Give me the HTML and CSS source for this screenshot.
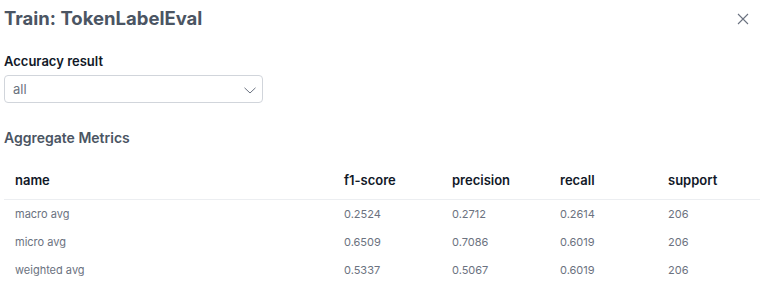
FILE: index.html
```html
<!DOCTYPE html>
<html lang="en">
  <head>
    <meta charset="UTF-8" />
    <meta name="viewport" content="width=device-width, initial-scale=1.0" />
    <title>Train: TokenLabelEval</title>
    <link rel="stylesheet" href="styles.css">
  </head>
  <body>
    <div class="modal">
      <div class="modal-header">
        <h2 class="modal-title">Train: TokenLabelEval</h2>
        <button class="close-button" aria-label="Close">
          <svg width="12" height="12" viewBox="0 0 12 12">
            <path d="M1 1 L11 11 M11 1 L1 11" stroke="#6b7280" stroke-width="1.1" fill="none" />
          </svg>
        </button>
      </div>

      <label class="field-label" for="accuracy">Accuracy result</label>
      <div class="select-box" id="accuracy">
        <span>all</span>
        <svg width="12" height="7" viewBox="0 0 12 7">
          <path d="M0.5 0.8 L6 6 L11.5 0.8" stroke="#6b7280" stroke-width="1" fill="none" />
        </svg>
      </div>

      <h3 class="section-title">Aggregate Metrics</h3>

      <table class="metrics">
        <colgroup>
          <col style="width: 329px" />
          <col style="width: 108px" />
          <col style="width: 108px" />
          <col style="width: 108px" />
          <col />
        </colgroup>
        <thead>
          <tr>
            <th>name</th>
            <th>f1-score</th>
            <th>precision</th>
            <th>recall</th>
            <th>support</th>
          </tr>
        </thead>
        <tbody>
          <tr>
            <td>macro avg</td>
            <td>0.2524</td>
            <td>0.2712</td>
            <td>0.2614</td>
            <td>206</td>
          </tr>
          <tr>
            <td>micro avg</td>
            <td>0.6509</td>
            <td>0.7086</td>
            <td>0.6019</td>
            <td>206</td>
          </tr>
          <tr>
            <td>weighted avg</td>
            <td>0.5337</td>
            <td>0.5067</td>
            <td>0.6019</td>
            <td>206</td>
          </tr>
        </tbody>
      </table>
    </div>
  </body>
</html>
```

FILE: styles.css
```css
body {
  margin: 0;
  background: #ffffff;
  font-family: Inter, "Noto Sans", sans-serif;
  color: #111827;
}

.modal {
  padding: 0 1px 0 4px;
}

.modal-header {
  display: flex;
  justify-content: space-between;
  align-items: flex-start;
  height: 32px;
}

.modal-title {
  margin: 0;
  padding-top: 4px;
  font-size: 18.5px;
  line-height: 28px;
  font-weight: 700;
  color: #4b5563;
}

.close-button {
  display: flex;
  border: none;
  background: none;
  padding: 0;
  margin: 13px 11px 0 0;
  cursor: pointer;
}

.field-label {
  display: block;
  margin-top: 19px;
  font-size: 13px;
  line-height: 20px;
  font-weight: 600;
  color: #111827;
}

.select-box {
  display: flex;
  justify-content: space-between;
  align-items: center;
  box-sizing: border-box;
  width: 259px;
  height: 28px;
  margin-top: 4px;
  padding: 0 6px 0 8px;
  border: 1px solid #d1d5db;
  border-radius: 4px;
  font-size: 13px;
  color: #6b7280;
}

.select-box svg {
  margin-top: 2px;
}

.section-title {
  margin: 24px 0 0;
  font-size: 14px;
  line-height: 22px;
  font-weight: 600;
  color: #4b5563;
}

.metrics {
  width: 756px;
  margin-top: 12px;
  border-collapse: collapse;
  table-layout: fixed;
}

.metrics th {
  height: 38px;
  padding: 0 0 0 11px;
  text-align: left;
  font-size: 13px;
  font-weight: 600;
  color: #111827;
  border-bottom: 1px solid #eceef1;
}

.metrics td {
  height: 28px;
  padding: 0 0 0 11px;
  font-size: 11px;
  color: #6b7280;
}
```
